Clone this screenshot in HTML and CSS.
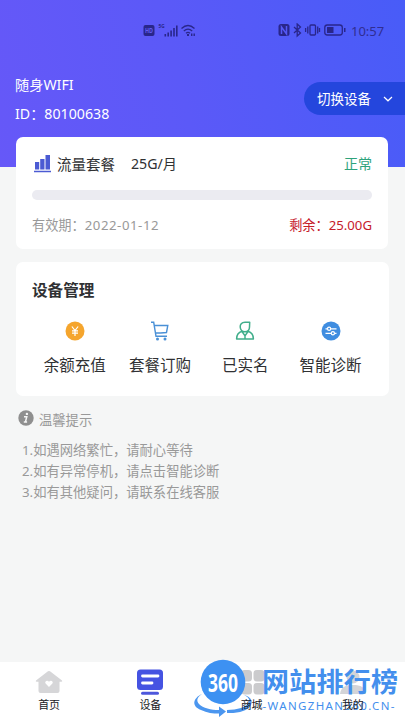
FILE: index.html
```
<!DOCTYPE html>
<html lang="zh-CN">
<head>
<meta charset="utf-8">
<title>随身WIFI</title>
<link rel="stylesheet" href="styles.css">
</head>
<body>
<div class="app">
  <header class="hero">
    <div class="status">
      <svg class="status-left" width="54" height="16" viewBox="0 0 54 16">
        <rect x="0.5" y="2" width="11" height="11" rx="2"/>
        <text class="hd" x="2" y="10.2" textLength="8" lengthAdjust="spacingAndGlyphs">HD</text>
        <text class="g5" x="15.5" y="5" textLength="6" lengthAdjust="spacingAndGlyphs">5G</text>
        <path d="M21.500 11h1.600v2.500h-1.600zM24.400 9.500h1.600v4h-1.600zM27.300 7.500h1.600v6h-1.600zM30.200 5h1.600v8.500h-1.600zM33 2.500h1.600v11h-1.600z"/>
        <g class="line"><path d="M38.500 5.500q6.500-6 13 0M40.800 8q4.200-3.600 8.400 0M43 10.200q2-1.600 4 0"/></g>
        <path d="M44 11h2v2h-2zM48 10.500h1.400v2.500h-1.400zM50.500 10.500h1.400v2.500h-1.400z"/>
      </svg>
      <svg class="status-right" width="70" height="16" viewBox="0 0 70 16">
        <rect x="0.500" y="1" width="11" height="12" rx="2.500"/>
        <path class="cut" d="M3.500 11V4l5 7V3"/>
        <g class="line" transform="translate(0 -1)">
          <path d="M16 5l6.500 6-3.300 3V2l3.300 3L16 11"/>
          <rect x="32" y="3" width="5.500" height="10" rx="1"/>
          <path d="M29.800 4.500v7M27.600 6v4M39.700 4.500v7M41.500 6v4"/>
          <rect x="46.800" y="3" width="17.500" height="10" rx="2.500"/>
        </g>
        <path d="M49 4h6.500v6h-6.500zM66 5h1.500v4h-1.500z"/>
      </svg>
      <span class="clock">10:57</span>
    </div>
    <div class="device">
      <div class="device-info">
        <div>随身WIFI</div>
        <div class="device-id">ID：80100638</div>
      </div>
      <div class="switch"><span>切换设备</span>
        <svg width="10" height="6" viewBox="0 0 10 6"><path d="M1 1l4 3.800L9 1"/></svg>
      </div>
    </div>
  </header>

  <section class="card plan">
    <div class="plan-top">
      <svg width="18" height="18" viewBox="0 0 18 18"><path d="M1 7h4.200v7.500H1zM6.200 4h4.300v10.500H6.200zM11.500 0h4.500v14.500h-4.500zM0 15.700h17v1.500H0z"/></svg>
      <span class="plan-name">流量套餐</span><span class="plan-size">25G/月</span>
      <span class="plan-state">正常</span>
    </div>
    <div class="bar"></div>
    <div class="plan-bottom"><span>有效期：<span class="date">2022-01-12</span></span><span class="left">剩余：25.00G</span></div>
  </section>

  <section class="card manage">
    <h2>设备管理</h2>
    <div class="actions">
      <div class="action">
        <svg width="20" height="20" viewBox="0 0 20 20"><circle cx="10" cy="10" r="9.500" fill="#f5a52d"/><path d="M6.900 5.500l3.100 4 3.100-4M10 9.500v5.500M7 9.800h6M7 12.200h6" fill="none" stroke="#fff" stroke-width="1.200"/></svg>
        <span>余额充值</span>
      </div>
      <div class="action">
        <svg width="20" height="20" viewBox="0 0 20 20" fill="none" stroke="#4a90d6" stroke-width="1.400"><path d="M1 1.300h2.700l2.300 14h11M4.300 4.500h13.500l-1.300 7-6 .5M5.500 12h5"/><g fill="#4a90d6" stroke="none"><circle cx="7.500" cy="18" r="1.500"/><circle cx="15" cy="18" r="1.500"/></g></svg>
        <span>套餐订购</span>
      </div>
      <div class="action">
        <svg width="20" height="20" viewBox="0 0 20 20" fill="none" stroke="#41ae8b" stroke-width="1.500" stroke-linejoin="round"><path d="M14.700 1.200H10C6.500 1.200 5 3.500 5.200 6c.2 2.700 2 4.800 4.700 4.800 3 0 4.600-2.200 4.600-4.800zM7 10.300c-3.500 1-5.400 3-5.400 7.700h16.800c0-4.700-1.900-6.700-5.400-7.700M7 10.600l3 4.200 3-4.200M10 14.500V18"/></svg>
        <span>已实名</span>
      </div>
      <div class="action">
        <svg width="20" height="20" viewBox="0 0 20 20"><circle cx="10" cy="10" r="9.500" fill="#3f8de0"/><g fill="none" stroke="#fff" stroke-width="1.200"><path d="M4.500 7.800h2M9.800 7.800h5.700M4.500 12.300h5.700M13.500 12.300h2"/><circle cx="8.100" cy="7.800" r="1.600"/><circle cx="11.900" cy="12.300" r="1.600"/></g></svg>
        <span>智能诊断</span>
      </div>
    </div>
  </section>

  <section class="tips">
    <div class="tips-title">
      <svg width="16" height="16" viewBox="0 0 16 16"><circle cx="8" cy="8" r="7.700" fill="#8f8f8f"/><path d="M6 6.700h2.800L7.400 12h1.700M5.800 12h1.600" fill="none" stroke="#f5f5f5" stroke-width="1.500"/><circle cx="8.900" cy="3.900" r="1.200" fill="#f5f5f5"/></svg>
      <span>温馨提示</span>
    </div>
    <div class="tip">1.如遇网络繁忙，请耐心等待</div>
    <div class="tip">2.如有异常停机，请点击智能诊断</div>
    <div class="tip">3.如有其他疑问，请联系在线客服</div>
  </section>

  <nav class="tabs">
    <div class="tab">
      <svg width="28" height="28" viewBox="0 0 28 28"><path d="M14 2Q15 2 16 3L27 11.500q.8 1.200-.8 1.200h-1.700V22q0 2-2 2h-17q-2 0-2-2v-9.300H1.800q-1.600 0-.8-1.200L12 3q1-1 2-1z" fill="#d6d6d8"/><path d="M14 18l-3.400-3.400c-1.500-2 1.500-4.200 3.400-1.900 1.900-2.300 4.900-.1 3.400 1.900z" fill="#fff"/></svg>
      <span>首页</span>
    </div>
    <div class="tab">
      <svg width="28" height="28" viewBox="0 0 28 28"><rect x="1" y=".5" width="26" height="20.500" rx="3.500" fill="#4553e2"/><path d="M6.500 7h15.500M6.500 14h9.500" stroke="#fff" stroke-width="2.800" stroke-linecap="round"/><path d="M6.500 24.200h15" stroke="#4d57dc" stroke-width="3" stroke-linecap="round"/></svg>
      <span>设备</span>
    </div>
    <div class="tab">
      <svg width="28" height="28" viewBox="0 0 28 28" fill="#cbcbcd"><rect x="3" y="1" width="11" height="11.500" rx="3.500"/><rect x="15.500" y="1" width="11" height="11.500" rx="3.500"/><rect x="3" y="14" width="11" height="11.500" rx="3.500"/><rect x="15.500" y="14" width="11" height="11.500" rx="3.500"/></svg>
      <span>商城</span>
    </div>
    <div class="tab">
      <svg width="28" height="28" viewBox="0 0 28 28" fill="#d3d4d8"><circle cx="14" cy="8" r="6.500"/><path d="M1 25c1-7 5-9 13-9s12 2 13 9z"/></svg>
      <span>我的</span>
    </div>
    <svg class="mark" width="215" height="64" viewBox="190 656 215 64">
      <circle cx="223" cy="682" r="22.300" fill="#3d91f2"/>
      <path d="M202 694C193 698 191 706 201 710C207 713 213 713.500 219 713.500V717L226 711.500L219 706.500V710C211 710 203 708 199 704C196 701 197 697 202 694z" fill="#4b96ef"/>
      <path d="M227 710C237 710 247 707 249 702C250 699 248 697 244 695C251 697 253 701 251 705C248 711 238 713.500 227 713z" fill="#4b96ef"/>
      <text class="m360" x="208" y="691.500" textLength="30" lengthAdjust="spacingAndGlyphs">360</text>
      <text class="mname" x="262" y="692" textLength="136">网站排行榜</text>
      <text class="murl" x="262.500" y="710" textLength="132">-WANGZHAN360.CN-</text>
    </svg>
  </nav>
</div>
</body>
</html>
```
FILE: styles.css
```
* { box-sizing: border-box; }
body {
  margin: 0;
  background: #f5f6f6;
  font-family: "Noto Sans", "Noto Sans CJK SC", sans-serif;
  color: #303133;
}
svg { display: block; flex: none; }
.app {
  width: 405px;
  height: 720px;
  display: flex;
  flex-direction: column;
  overflow: hidden;
}
.hero {
  height: 167px;
  flex: none;
  background: linear-gradient(75deg, #6658f8 0%, #5b59f8 45%, #485cf8 100%);
}
.status {
  height: 46px;
  padding: 15px 15px 0 143px;
  display: flex;
  align-items: center;
  fill: #29268a;
}
.status-right { margin-left: 81px; }
.status .line { fill: none; stroke: #29268a; stroke-width: 1.3; }
.status .cut { fill: none; stroke: #5559f6; stroke-width: 1.5; }
.hd { font-size: 7px; font-weight: 700; fill: #625cf3; }
.g5 { font-size: 5px; font-weight: 700; }
.clock {
  margin-left: 3px;
  font-size: 13px;
  line-height: 16px;
  white-space: nowrap;
  color: #302d91;
}
.device {
  display: flex;
  justify-content: space-between;
  padding: 29px 0 0 15px;
  color: #fff;
}
.device-info { font-size: 14.2px; line-height: 20px; }
.device-id { margin-top: 9px; }
.switch {
  margin-top: 7px;
  width: 101px;
  height: 33px;
  padding-left: 13px;
  border-radius: 17px 0 0 17px;
  background: #2446dd;
  display: flex;
  align-items: center;
  gap: 12px;
  font-size: 13.5px;
  line-height: 20px;
}
.switch svg { fill: none; stroke: #fff; stroke-width: 1.2; }
.card { background: #fff; flex: none; border-radius: 7px; }
.plan {
  width: 372px;
  height: 112px;
  margin: -30px 0 0 16px;
  padding: 17px 16px 0 16px;
}
.plan-top { display: flex; align-items: center; height: 20px; font-size: 14.5px; line-height: 20px; }
.plan-top svg { fill: #4b5bd3; margin-left: 2px; }
.plan-name { margin-left: 5px; }
.plan-size { margin-left: 16px; font-size: 14.2px; }
.plan-state { margin-left: auto; color: #2ea37b; font-size: 14px; }
.bar { margin-top: 16px; height: 10px; width: 340px; border-radius: 5px; background: #ebebf1; }
.plan-bottom {
  display: flex;
  justify-content: space-between;
  margin-top: 15px;
  font-size: 13.2px;
  line-height: 20px;
  color: #999;
}
.date { letter-spacing: 0.55px; }
.plan-bottom .left { color: #c6202b; }
.manage {
  width: 373px;
  height: 134px;
  margin: 13px 0 0 16px;
  padding: 18px 15px 0 16px;
}
h2 { margin: 0; font-size: 15.6px; line-height: 20px; font-weight: 600; }
.actions { display: grid; grid-template-columns: repeat(4, 85.3px); margin-top: 21px; }
.action { display: flex; flex-direction: column; align-items: center; font-size: 15.5px; line-height: 22px; gap: 13px; }
.tips { padding: 14px 0 0 18px; flex: 1; color: #999; font-size: 13.3px; }
.tips-title { display: flex; gap: 5px; line-height: 20px; margin-bottom: 9px; }
.tip { margin-left: 4px; line-height: 21.2px; }
.tips-title + .tip { margin-top: 10px; }
.tabs {
  position: relative;
  height: 58px;
  flex: none;
  background: #fff;
  display: grid;
  grid-template-columns: repeat(4, 101.25px);
  padding-top: 7px;
}
.tab { display: flex; flex-direction: column; align-items: center; margin-left: -3px; }
.tab span { position: relative; z-index: 2; font-size: 11px; line-height: 16px; color: #202126; }
.mark { position: absolute; left: 190px; bottom: 0; z-index: 1; }
.m360 { font-size: 25px; font-weight: 700; fill: #fff; }
.mname { font-size: 27px; font-weight: 700; fill: #438fed; }
.murl { font-size: 11.5px; fill: #438fed; }
```
